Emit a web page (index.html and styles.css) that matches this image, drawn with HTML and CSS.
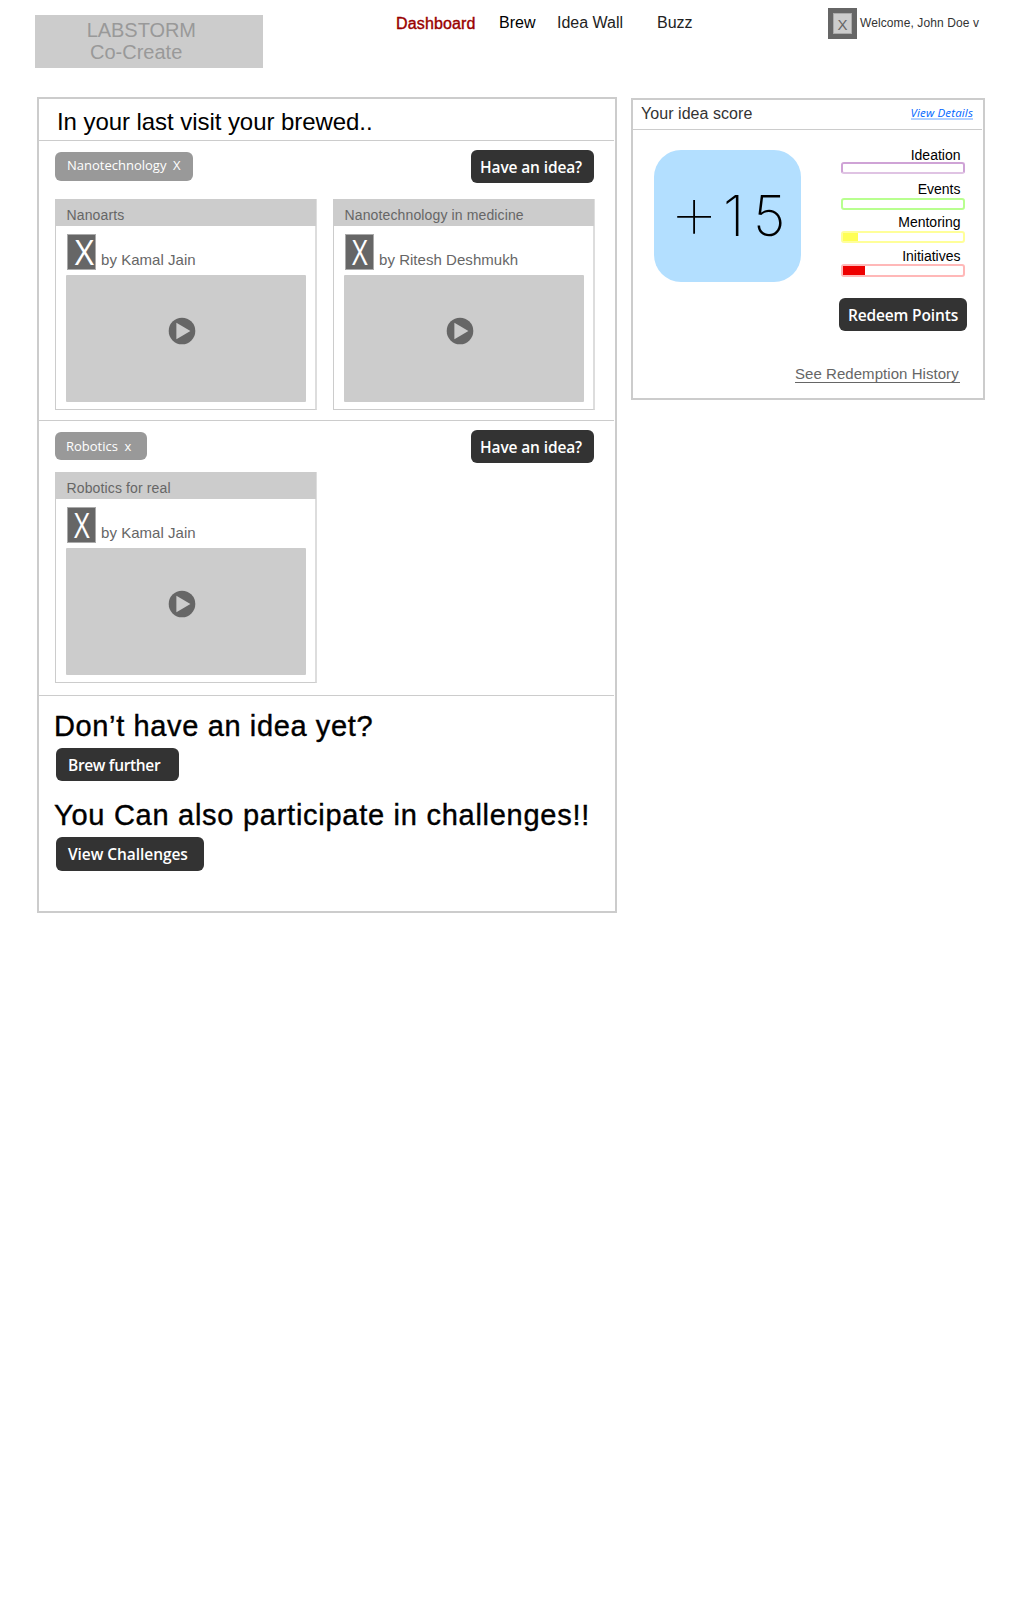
FILE: index.html
```html
<!DOCTYPE html>
<html lang="en">
<head>
<meta charset="utf-8">
<title>LABSTORM Co-Create</title>
<link rel="stylesheet" href="styles.css">
</head>
<body>
<header class="topbar">
  <div class="logo"><span class="logo-name">LABSTORM</span><span class="logo-sub">Co-Create</span></div>
  <nav class="nav">
    <a class="nav-item nav-active">Dashboard</a>
    <a class="nav-item nav-brew">Brew</a>
    <a class="nav-item nav-wall">Idea Wall</a>
    <a class="nav-item">Buzz</a>
  </nav>
  <div class="user">
    <div class="user-pic"><span class="user-x">X</span></div>
    <span class="user-name">Welcome, John Doe v</span>
  </div>
</header>
<main class="columns">
  <section class="panel feed">
    <h1 class="feed-title">In your last visit your brewed..</h1>
    <div class="topic">
      <div class="topic-head">
        <span class="tag tag-nano">Nanotechnology<span class="tag-x">X</span></span>
        <button class="btn btn-idea">Have an idea?</button>
      </div>
      <div class="cards">
        <article class="card">
          <h2 class="card-title">Nanoarts</h2>
          <div class="author"><span class="avatar"><span class="avatar-x avatar-x-wide">X</span></span><span class="author-name">by Kamal Jain</span></div>
          <div class="media"><svg class="play" width="28" height="28" viewBox="0 0 28 28"><circle cx="14" cy="14" r="13.3" fill="#666"/><path d="M8.4 5.8V22.3L22.4 14Z" fill="#ccc"/></svg></div>
        </article>
        <article class="card">
          <h2 class="card-title">Nanotechnology in medicine</h2>
          <div class="author"><span class="avatar"><span class="avatar-x">X</span></span><span class="author-name">by Ritesh Deshmukh</span></div>
          <div class="media"><svg class="play" width="28" height="28" viewBox="0 0 28 28"><circle cx="14" cy="14" r="13.3" fill="#666"/><path d="M8.4 5.8V22.3L22.4 14Z" fill="#ccc"/></svg></div>
        </article>
      </div>
    </div>
    <div class="topic topic-second">
      <div class="topic-head">
        <span class="tag tag-robo">Robotics<span class="tag-x">x</span></span>
        <button class="btn btn-idea">Have an idea?</button>
      </div>
      <div class="cards">
        <article class="card">
          <h2 class="card-title">Robotics for real</h2>
          <div class="author"><span class="avatar"><span class="avatar-x">X</span></span><span class="author-name">by Kamal Jain</span></div>
          <div class="media"><svg class="play" width="28" height="28" viewBox="0 0 28 28"><circle cx="14" cy="14" r="13.3" fill="#666"/><path d="M8.4 5.8V22.3L22.4 14Z" fill="#ccc"/></svg></div>
        </article>
      </div>
    </div>
    <div class="more">
      <h2 class="more-title">Don’t have an idea yet?</h2>
      <button class="btn btn-brew">Brew further</button>
      <h2 class="more-title more-title-next">You Can also participate in challenges!!</h2>
      <button class="btn btn-view">View Challenges</button>
    </div>
  </section>
  <aside class="panel score">
    <div class="score-head">
      <h2 class="score-title">Your idea score</h2>
      <a class="details">View Details</a>
    </div>
    <div class="score-body">
      <div class="points"><span class="points-plus">+</span><span class="points-one">1</span><span class="points-five">5</span></div>
      <div class="meters">
        <div class="meter"><span class="meter-label">Ideation</span><div class="bar bar-ideation"></div></div>
        <div class="meter"><span class="meter-label">Events</span><div class="bar bar-events"></div></div>
        <div class="meter"><span class="meter-label">Mentoring</span><div class="bar bar-mentoring"><div class="fill" style="width:15px"></div></div></div>
        <div class="meter"><span class="meter-label">Initiatives</span><div class="bar bar-initiatives"><div class="fill" style="width:22px"></div></div></div>
      </div>
    </div>
    <button class="btn btn-redeem">Redeem Points</button>
    <a class="history">See Redemption History</a>
  </aside>
</main>
</body>
</html>
```
FILE: styles.css
```css
* { box-sizing: border-box; }
body {
  margin: 0;
  width: 1024px;
  min-height: 1600px;
  background: #fff;
  color: #000;
  font-family: "Liberation Sans", Arial, sans-serif;
}
h1, h2 { margin: 0; font-weight: 400; }

.topbar { display: flex; align-items: flex-start; height: 97px; padding-left: 35px; }
.logo {
  display: flex; flex-direction: column;
  width: 228px; height: 53px; margin-top: 15px; padding-top: 4px;
  background: #ccc; color: #999; font-size: 20px; line-height: 22px;
}
.logo-name { margin-left: 51.7px; letter-spacing: -0.05px; }
.logo-sub { margin-left: 55px; }
.nav { display: flex; align-items: flex-start; width: 432px; margin-left: 133px; padding-top: 13px; }
.nav-item { font-size: 16px; line-height: 20px; color: #222; white-space: nowrap; }
.nav-active { width: 103px; margin-top: 1px; color: #990000; letter-spacing: 0.15px; -webkit-text-stroke: 0.4px #990000; }
.nav-brew { width: 58px; color: #000; }
.nav-wall { width: 100px; }
.user { display: flex; align-items: flex-start; padding-top: 8px; }
.user-pic { width: 29px; height: 31px; padding: 5px; background: #666; }
.user-x {
  display: block; width: 19px; height: 21px; border: 1px solid #aaa;
  background: #ccc; color: #666; font-size: 15px; line-height: 21px; text-align: center;
}
.user-name { margin: 7px 0 0 3px; font-size: 12px; line-height: 16px; letter-spacing: 0.1px; color: #333; white-space: nowrap; }

.columns { display: flex; align-items: flex-start; gap: 14px; padding-left: 37px; }
.panel { border: 2px solid #ccc; }
.feed { width: 580px; height: 816px; }
.feed-title {
  height: 42px; margin-right: 1px; padding: 9px 0 0 18px; border-bottom: 1px solid #ccc;
  font-size: 24px; line-height: 28px; letter-spacing: -0.06px;
}
.topic { height: 280px; margin-right: 1px; padding-left: 16px; border-bottom: 1px solid #ccc; }
.topic-second { height: 275px; }
.topic-head { display: flex; justify-content: space-between; align-items: flex-start; height: 58px; padding: 9px 20px 0 0; }
.topic-second .topic-head { height: 51px; }
.tag {
  height: 29px; margin-top: 2px; padding-left: 12px; border-radius: 6px; background: #999; color: #fff;
  font: 400 13px/26px "Open Sans", "Noto Sans", sans-serif; white-space: nowrap;
}
.tag-nano { width: 138px; }
.tag-robo { width: 92px; height: 28px; padding-left: 11px; line-height: 28px; }
.tag-x { margin-left: 6.5px; }
.btn {
  display: block; height: 33px; padding: 0; border: 0; border-radius: 6px; background: #333; color: #fff;
  font: 600 15.5px/34px "Open Sans", "Noto Sans", sans-serif; text-align: left; white-space: nowrap;
}
.btn-idea { width: 123px; padding-left: 9px; letter-spacing: -0.13px; }
.cards { display: flex; gap: 16px; }
.card { width: 262px; height: 211px; border: solid #ccc; border-width: 0 2px 1px 1px; border-right-color: #ddd; }
.card-title {
  height: 27px; margin-right: -1px; padding: 3px 0 0 10.5px; background: #ccc; color: #666;
  font-size: 14px; line-height: 26px; letter-spacing: 0.13px;
}
.author { display: flex; height: 49px; padding: 8px 0 0 11px; }
.avatar { display: flex; justify-content: center; width: 29px; height: 36px; border: 1px solid #aaa; background: #666; color: #fff; }
.avatar-x { font: 400 34px/34px "Open Sans", "Noto Sans", sans-serif; transform: scaleX(0.8); }
.avatar-x-wide { font-weight: 500; transform: translateX(2.5px) scaleX(0.98); }
.author-name { margin: 16px 0 0 5px; color: #666; font-size: 15px; line-height: 20px; letter-spacing: 0.04px; white-space: nowrap; }
.media { width: 240px; height: 127px; margin-left: 10px; padding: 42px 0 0 102px; background: #ccc; border-radius: 1px; }
.play { display: block; }

.more { padding: 13px 0 0 15px; }
.more-title { font-size: 29px; line-height: 34px; letter-spacing: 0.63px; white-space: nowrap; -webkit-text-stroke: 0.4px #000; }
.more-title-next { margin-top: 17px; letter-spacing: 0.73px; }
.more .btn { margin: 5px 0 0 2px; padding-left: 12px; }
.btn-brew { width: 123px; letter-spacing: -0.33px; }
.btn-view { width: 148px; letter-spacing: -0.06px; }
.more .btn-view { height: 34px; }

.score { width: 354px; height: 302px; margin-top: 1px; }
.score-head { display: flex; justify-content: space-between; height: 30px; margin-right: 1px; padding: 4px 9px 0 8px; border-bottom: 1px solid #ccc; }
.score-title { color: #333; font-size: 16px; line-height: 20px; letter-spacing: 0.05px; }
.details {
  height: 16px; border-bottom: 2px solid #b3d1ff; color: #0066ff;
  font: italic 400 11.5px/17px "Open Sans", "Noto Sans", sans-serif; letter-spacing: 0.15px;
}
.score-body { display: flex; justify-content: space-between; padding: 20px 18px 0 21px; height: 168px; }
.points {
  display: flex; width: 147px; height: 132px; border-radius: 27px; background: #b3dfff;
  font: 200 56px/132px Inter, Roboto, sans-serif;
}
.points-plus { width: 69px; padding-left: 14px; font-size: 82px; font-weight: 100; line-height: 121px; }
.points-one { width: 30px; }
.meters { display: flex; flex-direction: column; width: 124px; margin-top: -3px; }
.meter { height: 33.6px; }
.meter-label { display: block; padding-right: 4.5px; font-size: 14px; line-height: 16px; text-align: right; }
.bar { height: 12px; border: 2px solid; border-radius: 3px; }
.bar-ideation { margin-top: -1px; border-color: #cfa3d6; border-bottom-color: #dfc3e3; }
.bar-events { margin-top: 1px; border-color: #b8ff8f; }
.bar-mentoring { margin-top: 1px; border-color: #ffff99; }
.bar-initiatives { height: 13px; border-color: #ffb8b8; }
.fill { height: 100%; background: #ffff55; }
.bar-initiatives .fill { background: #ee0000; }
.btn-redeem { width: 128px; margin-left: 206px; padding-left: 9px; letter-spacing: -0.15px; }
.history {
  display: block; width: 165px; height: 19px; margin: 33px 0 0 162px; border-bottom: 1px solid #666; color: #666;
  font-size: 15px; line-height: 20px; letter-spacing: 0.05px; white-space: nowrap;
}
```
